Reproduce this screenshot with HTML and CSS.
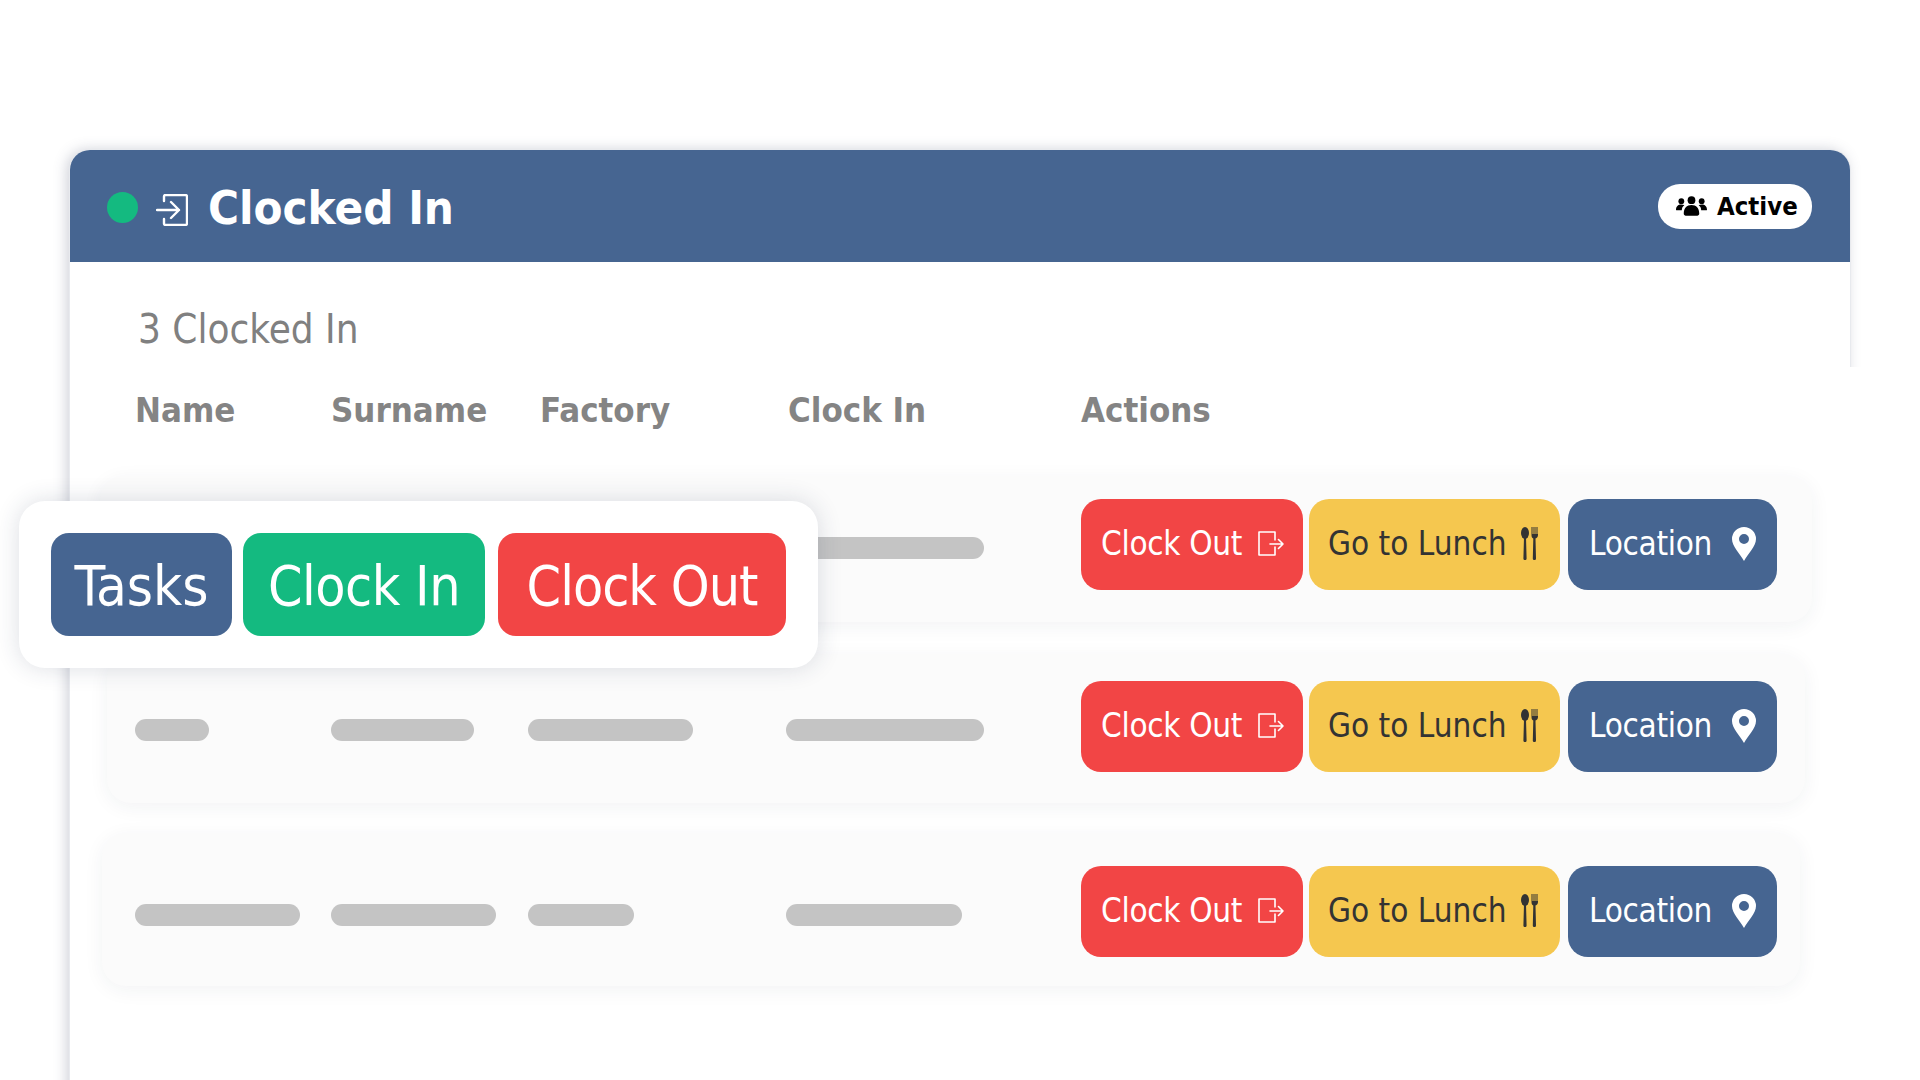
FILE: index.html
```html
<!DOCTYPE html>
<html lang="en">
<head>
<meta charset="utf-8">
<title>Clocked In</title>
<link rel="stylesheet" href="styles.css">
</head>
<body>
<main class="stage">
  <section class="card">
    <header class="card-head">
      <span class="dot"></span>
      <svg class="login-icon" viewBox="0 0 32 32" fill="none" stroke="#fff" stroke-width="2.400" stroke-linecap="round" stroke-linejoin="round"><path d="M8 7V2.500A1.500 1.500 0 0 1 9.500 1H29.500A1.500 1.500 0 0 1 31 2.500V29.500a1.500 1.500 0 0 1-1.500 1.500H9.500A1.500 1.500 0 0 1 8 29.500V25"/><path d="M1 16H23M15 8l8 8-8 8"/></svg>
      <h1 class="title">Clocked In</h1>
      <span class="status">
        <svg class="users-icon" viewBox="0 0 32 20" fill="#000"><circle cx="5.500" cy="5" r="3"/><circle cx="26.500" cy="5" r="3"/><circle cx="16" cy="4" r="4"/><path d="M0 14c0-3.500 2-5.500 5.500-5.500 1.300 0 2.300.3 3.100.8C6.900 10.500 6 12.200 6 14.500H1a1 1 0 0 1-1-.5zM32 14c0-3.500-2-5.500-5.500-5.500-1.300 0-2.300.3-3.100.8 1.700 1.200 2.600 2.900 2.600 5.200h5a1 1 0 0 0 1-.5zM8 18c0-6 3-9 8-9s8 3 8 9c0 1-1 2-2 2H10c-1 0-2-1-2-2z"/></svg>
        Active
      </span>
    </header>

    <p class="count">3 Clocked In</p>

    <div class="columns">
      <span>Name</span><span>Surname</span><span class="col-factory">Factory</span><span class="col-clock">Clock In</span><span class="col-actions">Actions</span>
    </div>

    <div class="row row-a">
      <span class="bar w-74"></span><span class="bar w-143"></span><span class="bar w-165"></span><span class="bar w-198"></span>
      <div class="actions">
        <button class="btn btn-out">Clock Out <svg class="ico-out" viewBox="0 0 26 25" fill="none" stroke="#fff" stroke-width="1.600" stroke-linecap="round" stroke-linejoin="round"><path d="M17 9V1H1v23h16v-8"/><path d="M12 13h13M20.500 8.500 25 13l-4.500 4.500"/></svg></button>
        <button class="btn btn-lunch">Go to Lunch <svg class="ico-food" viewBox="0 0 18 33" fill="#333"><ellipse cx="4" cy="6" rx="4" ry="6"/><path d="M3 10h2l.6 21.500a1.600 1.600 0 0 1-3.200 0zM10.500 0h1v7h1V0h1v7h1V0h1v7h1V0h.5v8c0 2-1 3-2.500 3.500l.5 20a1.600 1.600 0 0 1-3.200 0l.5-20C11 11 10.500 10 10.500 8z"/></svg></button>
        <button class="btn btn-loc">Location <svg class="ico-pin" viewBox="0 0 24 34"><path fill="#fff" fill-rule="evenodd" d="M12 0a12 12 0 0 1 12 12c0 7-8 15-12 22C8 27 0 19 0 12A12 12 0 0 1 12 0zm0 7a5 5 0 1 0 0 10 5 5 0 0 0 0-10z"/></svg></button>
      </div>
    </div>

    <div class="row row-b">
      <span class="bar w-74"></span><span class="bar w-143"></span><span class="bar w-165"></span><span class="bar w-198"></span>
      <div class="actions">
        <button class="btn btn-out">Clock Out <svg class="ico-out" viewBox="0 0 26 25" fill="none" stroke="#fff" stroke-width="1.600" stroke-linecap="round" stroke-linejoin="round"><path d="M17 9V1H1v23h16v-8"/><path d="M12 13h13M20.500 8.500 25 13l-4.500 4.500"/></svg></button>
        <button class="btn btn-lunch">Go to Lunch <svg class="ico-food" viewBox="0 0 18 33" fill="#333"><ellipse cx="4" cy="6" rx="4" ry="6"/><path d="M3 10h2l.6 21.500a1.600 1.600 0 0 1-3.200 0zM10.500 0h1v7h1V0h1v7h1V0h1v7h1V0h.5v8c0 2-1 3-2.500 3.500l.5 20a1.600 1.600 0 0 1-3.200 0l.5-20C11 11 10.500 10 10.500 8z"/></svg></button>
        <button class="btn btn-loc">Location <svg class="ico-pin" viewBox="0 0 24 34"><path fill="#fff" fill-rule="evenodd" d="M12 0a12 12 0 0 1 12 12c0 7-8 15-12 22C8 27 0 19 0 12A12 12 0 0 1 12 0zm0 7a5 5 0 1 0 0 10 5 5 0 0 0 0-10z"/></svg></button>
      </div>
    </div>

    <div class="row row-c">
      <span class="bar w-165"></span><span class="bar w-165"></span><span class="bar w-106"></span><span class="bar w-176"></span>
      <div class="actions">
        <button class="btn btn-out">Clock Out <svg class="ico-out" viewBox="0 0 26 25" fill="none" stroke="#fff" stroke-width="1.600" stroke-linecap="round" stroke-linejoin="round"><path d="M17 9V1H1v23h16v-8"/><path d="M12 13h13M20.500 8.500 25 13l-4.500 4.500"/></svg></button>
        <button class="btn btn-lunch">Go to Lunch <svg class="ico-food" viewBox="0 0 18 33" fill="#333"><ellipse cx="4" cy="6" rx="4" ry="6"/><path d="M3 10h2l.6 21.500a1.600 1.600 0 0 1-3.200 0zM10.500 0h1v7h1V0h1v7h1V0h1v7h1V0h.5v8c0 2-1 3-2.500 3.500l.5 20a1.600 1.600 0 0 1-3.200 0l.5-20C11 11 10.500 10 10.500 8z"/></svg></button>
        <button class="btn btn-loc">Location <svg class="ico-pin" viewBox="0 0 24 34"><path fill="#fff" fill-rule="evenodd" d="M12 0a12 12 0 0 1 12 12c0 7-8 15-12 22C8 27 0 19 0 12A12 12 0 0 1 12 0zm0 7a5 5 0 1 0 0 10 5 5 0 0 0 0-10z"/></svg></button>
      </div>
    </div>
  </section>

  <div class="shadow-cover"></div>

  <div class="popup">
    <button class="pop-btn pop-tasks">Tasks</button>
    <button class="pop-btn pop-in">Clock In</button>
    <button class="pop-btn pop-out">Clock Out</button>
  </div>
</main>
</body>
</html>
```

FILE: styles.css
```css
* { box-sizing: border-box; }

html, body {
  margin: 0;
  height: 100%;
  background: #fff;
}

body {
  font-family: "DejaVu Sans Condensed", "DejaVu Sans", sans-serif;
  font-stretch: condensed;
  overflow: hidden;
}

.stage {
  position: relative;
  width: 1920px;
  height: 1080px;
  padding: 150px 70px 0 70px;
  overflow: hidden;
}

.card {
  height: 1000px;
  background: #fff;
  border-radius: 20px 20px 0 0;
  box-shadow: 0 0 0 1px #e8eaee, -3px 0 14px rgba(60, 70, 100, .26);
}

.card-head {
  display: flex;
  align-items: center;
  height: 112px;
  padding: 0 38px 0 37px;
  background: #466591;
  border-radius: 20px 20px 0 0;
  color: #fff;
}

.dot {
  flex: none;
  width: 31px;
  height: 31px;
  margin-top: 3px;
  border-radius: 50%;
  background: #14ba80;
}

.login-icon {
  flex: none;
  width: 32px;
  height: 32px;
  margin: 8px 20px 0 18px;
}

.title {
  flex: 1;
  margin: 4px 0 0;
  font-size: 47px;
  line-height: 56px;
  font-weight: 700;
}

.status {
  display: flex;
  align-items: center;
  gap: 10px;
  width: 154px;
  height: 45px;
  margin-top: 1px;
  padding-left: 18px;
  padding-bottom: 1px;
  border-radius: 22px;
  background: #fff;
  color: #000;
  font-size: 25.500px;
  font-weight: 700;
}

.users-icon {
  flex: none;
  width: 31px;
  height: 20px;
}

.count {
  margin: 0;
  padding: 44px 0 0 68px;
  font-size: 40px;
  line-height: 46px;
  color: #808080;
}

.columns {
  display: grid;
  grid-template-columns: 196px 197px 258px 295px auto;
  margin-top: 38px;
  padding-left: 65px;
  font-size: 34.500px;
  line-height: 40px;
  font-weight: 700;
  color: #848484;
}

.col-factory { margin-left: 12px; }
.col-clock { margin-left: 2px; }

.row {
  display: grid;
  grid-template-columns: 196px 197px 258px 295px auto;
  align-items: center;
  background: #fbfbfb;
  border-radius: 24px;
  box-shadow: 0 4px 20px rgba(40, 50, 70, .06);
}

.row-a {
  margin: 46px 38px 0 30px;
  padding: 23px 0 32px 35px;
}

.row-b {
  margin: 32px 45px 0 37px;
  padding: 27px 0 31px 28px;
}

.row-c {
  margin: 30px 50px 0 32px;
  padding: 33px 0 29px 33px;
}

.bar {
  display: block;
  height: 22px;
  margin-top: 7px;
  border-radius: 11px;
  background: #c4c4c4;
}

.w-74 { width: 74px; }
.w-106 { width: 106px; }
.w-143 { width: 143px; }
.w-165 { width: 165px; }
.w-176 { width: 176px; }
.w-198 { width: 198px; }

.actions {
  display: flex;
  gap: 6px;
}

.btn {
  display: flex;
  align-items: center;
  justify-content: space-between;
  height: 91px;
  padding: 0 19px 2px 20px;
  border: 0;
  border-radius: 20px;
  font: inherit;
  font-size: 33px;
  white-space: nowrap;
}

.btn-out { width: 222px; letter-spacing: -.300px; background: #f24545; color: #fff; }
.btn-lunch { width: 251px; padding-left: 19px; padding-right: 21px; background: #f5c74f; color: #333; }
.btn-loc { width: 209px; margin-left: 2px; padding-left: 21px; padding-right: 21px; letter-spacing: -.300px; background: #466591; color: #fff; }

.ico-out { flex: none; width: 26px; height: 25px; }
.ico-food { flex: none; width: 18px; height: 33px; }
.ico-pin { flex: none; width: 24px; height: 34px; }

.shadow-cover {
  position: absolute;
  left: 1850px;
  top: 367px;
  width: 70px;
  height: 713px;
  background: #fff;
}

.popup {
  position: absolute;
  left: 19px;
  top: 501px;
  display: flex;
  width: 799px;
  height: 167px;
  padding: 32px 32px 0;
  background: #fff;
  border-radius: 26px;
  box-shadow: 0 0 24px rgba(40, 50, 80, .16);
}

.pop-btn {
  height: 103px;
  padding: 2px 0 0;
  border: 0;
  border-radius: 18px;
  color: #fff;
  font: inherit;
  font-size: 55px;
  white-space: nowrap;
}

.pop-tasks { width: 181px; font-size: 56px; background: #466591; }
.pop-in { width: 242px; margin-left: 11px; letter-spacing: -.500px; background: #14ba80; }
.pop-out { width: 288px; margin-left: 13px; letter-spacing: -1px; background: #f24545; }
```
